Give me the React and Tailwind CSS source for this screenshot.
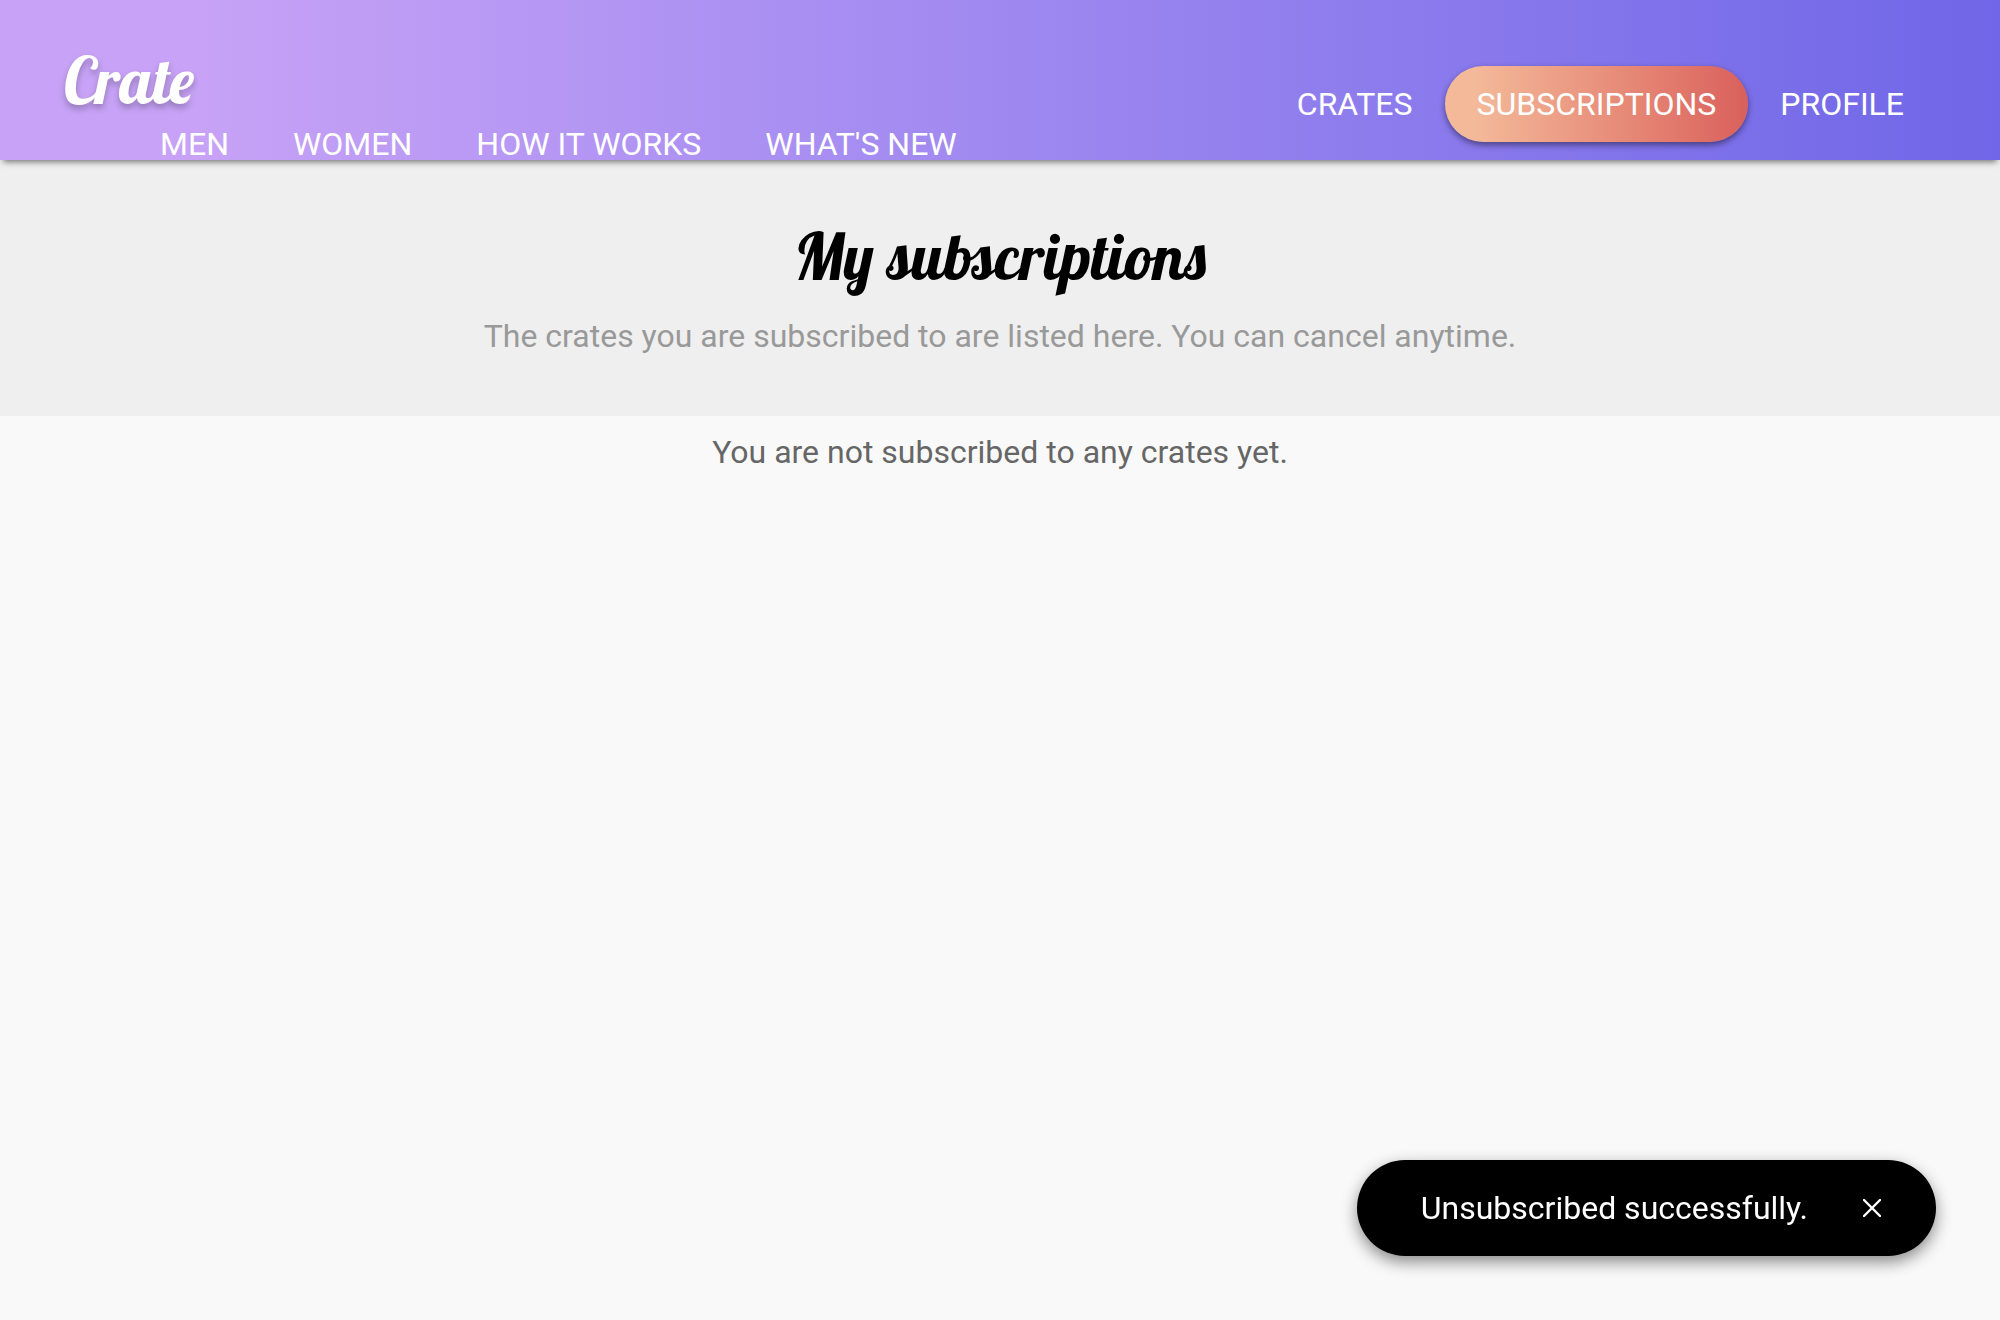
import React from "react";

const display = "font-['Lobster','Liberation_Serif',serif] font-normal";

const mainLinks = ["MEN", "WOMEN", "HOW IT WORKS", "WHAT'S NEW"];

function UserLink({ label, active }) {
  return (
    <a
      href="#"
      aria-current={active ? "page" : undefined}
      className={
        active
          ? "rounded-full bg-linear-to-r from-[#f3b999] from-10% to-[#d9605c] px-8 py-5 shadow-[0_3px_6px_rgba(0,0,0,0.45)]"
          : "px-8 py-5"
      }
    >
      {label}
    </a>
  );
}

function Header() {
  return (
    <header className="relative flex h-40 items-start justify-between bg-linear-to-r from-[#c7a2f6] from-10% to-[#7066e7] px-16 text-[32px] leading-9 text-white shadow-[0_5px_6px_-3px_rgba(0,0,0,0.5)]">
      <div className="pt-10">
        <a href="#" className={`${display} mb-1.5 block text-[64px] leading-20 [text-shadow:0_4px_6px_rgba(0,0,0,0.25)]`}>
          Crate
        </a>
        <nav aria-label="Shop" className="ml-16 flex">
          {mainLinks.map((label) => (
            <a key={label} href="#" className="px-8">
              {label}
            </a>
          ))}
        </nav>
      </div>
      <nav aria-label="Account" className="flex pt-[66px]">
        <UserLink label="CRATES" />
        <UserLink label="SUBSCRIPTIONS" active />
        <UserLink label="PROFILE" />
      </nav>
    </header>
  );
}

function Toast() {
  return (
    <div
      role="status"
      className="fixed right-16 bottom-16 flex h-24 items-center gap-12 rounded-full bg-black pr-12 pl-16 text-[32px] leading-9 text-white shadow-[0_6px_16px_rgba(0,0,0,0.45)]"
    >
      <p>Unsubscribed successfully.</p>
      <button type="button" aria-label="Close" className="p-[7px]">
        <svg viewBox="0 0 18 18" className="size-[18px]" fill="none" stroke="currentColor" strokeWidth="2.4" strokeLinecap="round">
          <path d="M1 1 17 17M17 1 1 17" />
        </svg>
      </button>
    </div>
  );
}

export default function App() {
  return (
    <div className="min-h-screen bg-[#f9f9f9] font-['Roboto',sans-serif] text-[32px] leading-9 text-[#666]">
      <Header />
      <main className="text-center">
        <div className="bg-[#efefef] px-16 pt-14 pb-[62px]">
          <h1 className={`${display} text-[64px] leading-20 text-black`}>My subscriptions</h1>
          <p className="mt-[22px] text-[#999]">The crates you are subscribed to are listed here. You can cancel anytime.</p>
        </div>
        <p className="p-[18px]">You are not subscribed to any crates yet.</p>
      </main>
      <Toast />
    </div>
  );
}
